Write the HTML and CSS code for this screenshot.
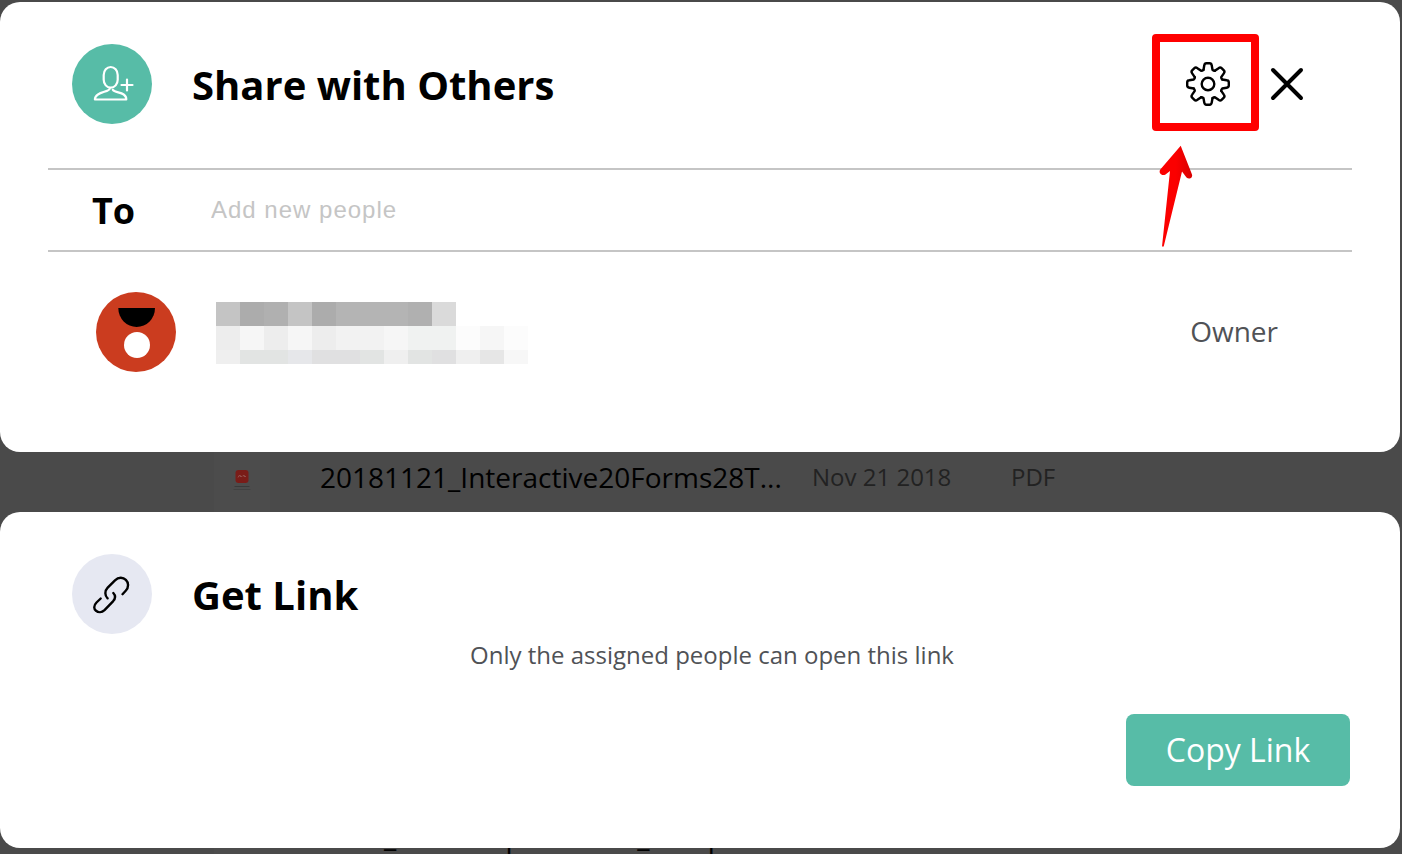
FILE: index.html
```html
<!DOCTYPE html>
<html lang="en">
<head>
<meta charset="utf-8">
<meta name="viewport" content="width=device-width, initial-scale=1">
<title>Share with Others</title>
<link rel="stylesheet" href="styles.css">
</head>
<body>
<main class="page">
  <section class="panel share">
    <header class="panel-head">
      <svg class="badge badge-share" viewBox="0 0 80 80" aria-hidden="true">
        <rect x="31.7" y="23" width="14" height="20.7" rx="7" ry="8"/>
        <path d="M37.7 44.5c0 4-14.8 2.800-14.800 11h31.400c0-8-11.500-6-13.500-9.800M49.500 41h11M55 35.500v11"/>
      </svg>
      <h1 class="title">Share with Others</h1>
      <div class="actions">
        <div class="settings">
          <button class="icon-button" type="button" aria-label="Settings">
            <svg class="gear" viewBox="-22 -22 44 44" aria-hidden="true">
              <defs><path id="tooth" d="M-4.500-14.200L-3.700-18.700Q-3.400-20.800-1.600-20.800H1.600Q3.400-20.800 3.700-18.700L4.500-14.200Q5.500-13.200 6.860-13.200"/></defs>
              <use href="#tooth"/>
              <use href="#tooth" transform="rotate(45)"/>
              <use href="#tooth" transform="rotate(90)"/>
              <use href="#tooth" transform="rotate(135)"/>
              <use href="#tooth" transform="rotate(180)"/>
              <use href="#tooth" transform="rotate(225)"/>
              <use href="#tooth" transform="rotate(270)"/>
              <use href="#tooth" transform="rotate(315)"/>
              <circle r="6.300"/>
            </svg>
          </button>
          <span class="highlight"></span>
          <svg class="arrow" viewBox="0 0 36 104" aria-hidden="true">
            <defs><linearGradient id="red"><stop offset="0" stop-color="#fb0000"/><stop offset=".5" stop-color="#fb0000"/><stop offset="1" stop-color="#d90000"/></linearGradient></defs>
            <path fill="url(#red)" d="M22.700 1.700L34 30.500C35 34 31 36 28.500 33.500L24 27.500L5.700 102.500H4L12 27L7.500 30.500C4 32.500 0 29 2.300 25.500Z"/>
          </svg>
        </div>
        <button class="icon-button close" type="button" aria-label="Close">
          <svg class="cross" viewBox="0 0 34 34" aria-hidden="true"><path d="M3 3l28 28M31 3L3 31"/></svg>
        </button>
      </div>
    </header>
    <div class="recipient">
      <label class="to" for="people">To</label>
      <input class="people" id="people" type="text" placeholder="Add new people">
    </div>
    <div class="member">
      <svg class="avatar" viewBox="0 0 80 80" aria-hidden="true">
        <circle cx="40" cy="40" r="40" fill="#cb3c1f"/>
        <path d="M22.300 16H59a18.350 19 0 0 1-36.700 0z"/>
        <circle cx="41" cy="53" r="13" fill="#fff"/>
      </svg>
      <svg class="redacted" viewBox="0 0 312 62" shape-rendering="crispEdges" aria-hidden="true">
        <path fill="#c4c4c4" d="M0 0h24v24H0zM72 0h24v24H72z"/>
        <path fill="#acacac" d="M24 0h24v24H24zM96 0h24v24H96z"/>
        <path fill="#b0b0b0" d="M48 0h24v24H48zM192 0h24v24h-24z"/>
        <path fill="#b4b4b4" d="M120 0h72v24h-72z"/>
        <path fill="#dadada" d="M216 0h24v24h-24z"/>
        <path fill="#ededed" d="M0 24h24v24H0zM48 24h24v24H48zM96 24h24v24H96z"/>
        <path fill="#f6f6f6" d="M24 24h24v24H24zM72 24h24v24H72zM168 24h24v24h-24zM264 24h24v24h-24z"/>
        <path fill="#f2f2f2" d="M120 24h48v24h-48z"/>
        <path fill="#f0f2f1" d="M192 24h48v24h-48z"/>
        <path fill="#fcfcfc" d="M240 24h24v24h-24zM288 24h24v24h-24z"/>
        <path fill="#efefef" d="M0 48h24v14H0zM168 48h24v14h-24zM240 48h24v14h-24z"/>
        <path fill="#e2e4e3" d="M24 48h48v14H24zM192 48h24v14h-24zM144 48h24v14h-24z"/>
        <path fill="#e6e7ea" d="M72 48h24v14H72z"/>
        <path fill="#e0e0e1" d="M96 48h48v14H96zM216 48h24v14h-24z"/>
        <path fill="#e6e6e6" d="M264 48h24v14h-24z"/>
        <path fill="#f7f7f7" d="M288 48h24v14h-24z"/>
      </svg>
      <span class="role">Owner</span>
    </div>
  </section>

  <div class="file-row">
    <div class="thumb">
      <svg class="file-icon" viewBox="0 0 18 22" aria-hidden="true">
        <rect x="2.500" y="0" width="13" height="13" rx="3" fill="#7a1c18"/>
        <path d="M5 7.500l1-2h1.500l-.5 1h2l1-1h1.500l-.500 1h2" fill="none" stroke="#8f4c48"/>
        <path d="M1.500 16.500h15" stroke="#3a3a3a"/>
        <path d="M.500 19.500h17" stroke="#424242"/>
      </svg>
    </div>
    <span class="file-name">20181121_Interactive20Forms28T...</span>
    <span class="file-date">Nov 21 2018</span>
    <span class="file-type">PDF</span>
  </div>

  <section class="panel link">
    <header class="panel-head">
      <svg class="badge badge-link" viewBox="0 0 80 80" aria-hidden="true">
        <path d="M50.500 40.200L53.500 37C61 29 50.500 19 43 26.300L35.700 33.700C32.500 37 32.700 41.500 35.600 44.300M28.700 44.500L24.500 48.500C18 55 27 61.500 32.500 56.200L41 47.300C43.500 44.500 43.500 41.300 41.300 39"/>
      </svg>
      <h2 class="title">Get Link</h2>
    </header>
    <p class="note">Only the assigned people can open this link</p>
    <button class="copy" type="button">Copy Link</button>
  </section>

  <div class="file-row file-row-cut">
    <div class="thumb"></div>
    <span class="file-name">2018_Internal personnel_datapa</span>
  </div>
</main>
</body>
</html>
```
FILE: styles.css
```css
* { box-sizing: border-box; }

body {
  margin: 0;
  background: #4a4a4a;
  color: #000;
  font-family: "Open Sans", "Noto Sans", sans-serif;
}

.page {
  display: flex;
  flex-direction: column;
  min-height: 100vh;
  padding-top: 2px;
}

.panel {
  margin-right: 2px;
  background: #fff;
  border-radius: 20px;
}

.share { padding: 0 48px 80px; }

.panel-head {
  display: flex;
  align-items: center;
  gap: 40px;
  padding: 42px 24px 44px;
}

.badge {
  flex: none;
  width: 80px;
  height: 80px;
  border-radius: 50%;
  fill: none;
  stroke-linecap: round;
  stroke-linejoin: round;
}

.badge-share {
  background: #57bca7;
  stroke: #fff;
  stroke-width: 2.2;
}

.badge-link {
  background: #e6e8f2;
  stroke: #000;
  stroke-width: 2.4;
}

.title {
  margin: 0;
  padding-top: 2px;
  font-size: 40px;
  line-height: 56px;
  font-weight: 700;
}

.actions {
  display: flex;
  align-items: center;
  gap: 40px;
  margin-left: auto;
  padding-right: 24px;
}

.icon-button {
  display: block;
  padding: 0;
  border: 0;
  background: none;
}

.settings { position: relative; }

.gear {
  display: block;
  width: 44px;
  height: 44px;
  fill: none;
  stroke: #000;
  stroke-width: 2.4;
  stroke-linecap: round;
  stroke-linejoin: round;
}

.cross {
  display: block;
  width: 34px;
  height: 34px;
  fill: none;
  stroke: #000;
  stroke-width: 4;
  stroke-linecap: round;
}

.highlight {
  position: absolute;
  top: -28px;
  left: -34px;
  width: 107px;
  height: 97px;
  border: 8px solid #f00;
  border-radius: 4px;
  pointer-events: none;
}

.arrow {
  position: absolute;
  top: 82px;
  left: -28px;
  width: 36px;
  height: 104px;
  pointer-events: none;
}

.recipient {
  display: flex;
  align-items: center;
  height: 84px;
  padding: 0 44px;
  border-top: 2px solid #c5c5c5;
  border-bottom: 2px solid #c5c5c5;
}

.to {
  flex: none;
  width: 119px;
  padding-top: 2px;
  font-size: 36px;
  line-height: 48px;
  font-weight: 700;
}

.people {
  flex: 1;
  min-width: 0;
  padding: 0;
  border: 0;
  outline: 0;
  background: none;
  font-family: "Liberation Sans", Arial, sans-serif;
  font-size: 24px;
  letter-spacing: 1px;
}

.people::placeholder { color: #c5c5c5; }

.member {
  display: flex;
  align-items: center;
  gap: 40px;
  padding: 40px 74px 0 48px;
}

.avatar {
  flex: none;
  width: 80px;
  height: 80px;
}

.redacted {
  width: 312px;
  height: 62px;
  margin-top: 2px;
}

.role {
  margin-left: auto;
  padding-bottom: 2px;
  color: #505256;
  font-size: 28px;
  line-height: 40px;
}

.file-row {
  display: flex;
  align-items: center;
  height: 60px;
  padding-left: 214px;
  overflow: hidden;
  white-space: nowrap;
}

.thumb {
  display: flex;
  align-items: center;
  align-self: stretch;
  justify-content: center;
  width: 56px;
  margin-right: 50px;
  padding-bottom: 2px;
  background: #4c4c4c;
}

.file-icon {
  width: 18px;
  height: 22px;
}

.file-name {
  width: 492px;
  padding-bottom: 10px;
  font-size: 28px;
  line-height: 40px;
}

.file-date {
  width: 199px;
  padding-bottom: 10px;
  color: #222;
  font-size: 24px;
  line-height: 36px;
}

.file-type {
  padding-bottom: 10px;
  color: #222;
  font-size: 24px;
  line-height: 36px;
}

.link {
  display: flex;
  flex-direction: column;
  padding: 0 50px 62px 48px;
}

.link .panel-head { padding-bottom: 0; }

.note {
  margin: 3px 0 41px;
  padding-left: 26px;
  color: #505256;
  font-size: 24px;
  line-height: 36px;
  text-align: center;
}

.copy {
  align-self: flex-end;
  width: 224px;
  padding: 12px 0;
  border: 0;
  border-radius: 8px;
  background: #57bca7;
  color: #fff;
  font: 32px/48px "Open Sans", "Noto Sans", sans-serif;
}

.file-row-cut {
  align-items: flex-end;
  height: 6px;
}

.file-row-cut .file-name {
  margin-bottom: -2px;
  padding: 0;
}
```
